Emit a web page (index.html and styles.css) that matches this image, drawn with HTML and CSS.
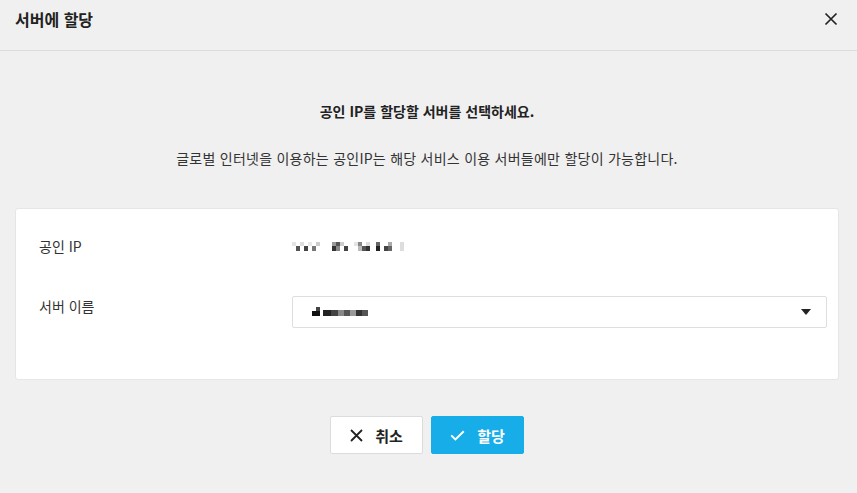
FILE: index.html
```html
<!DOCTYPE html>
<html lang="ko">
<head>
    <meta charset="UTF-8">
    <meta name="viewport" content="width=device-width, initial-scale=1.0">
    <title>서버에 할당</title>
    <link rel="stylesheet" href="styles.css">
</head>
<body>
    <div class="modal">
        <header class="modal-header">
            <h2 class="modal-title">서버에 할당</h2>
            <button class="close-button" aria-label="닫기">
                <svg width="14" height="14" viewBox="0 0 14 14"><path d="M1.5 1.5 L12.5 12.5 M12.5 1.5 L1.5 12.5" stroke="#222" stroke-width="1.7" fill="none"/></svg>
            </button>
        </header>

        <main class="modal-body">
            <p class="guide-title">공인 IP를 할당할 서버를 선택하세요.</p>
            <p class="guide-text">글로벌 인터넷을 이용하는 공인IP는 해당 서비스 이용 서버들에만 할당이 가능합니다.</p>

            <section class="form-card">
                <div class="form-row">
                    <span class="form-label">공인 IP</span>
                    <span class="form-value">
                        <!-- 마스킹된 IP -->
                        <svg class="masked" width="114" height="15" viewBox="0 0 114 15">
                            <rect x="0" y="3" width="4" height="4" fill="#e4e4e4"/>
                            <rect x="4" y="7" width="4" height="5" fill="#555"/>
                            <rect x="8" y="3" width="4" height="4" fill="#ddd"/>
                            <rect x="12" y="7" width="4" height="5" fill="#444"/>
                            <rect x="16" y="3" width="4" height="4" fill="#e8e8e8"/>
                            <rect x="20" y="7" width="4" height="5" fill="#777"/>
                            <rect x="24" y="3" width="4" height="4" fill="#ccc"/>
                            <rect x="40" y="3" width="4" height="4" fill="#999"/>
                            <rect x="40" y="7" width="4" height="5" fill="#333"/>
                            <rect x="44" y="3" width="4" height="4" fill="#555"/>
                            <rect x="44" y="7" width="4" height="5" fill="#888"/>
                            <rect x="48" y="3" width="4" height="4" fill="#ccc"/>
                            <rect x="52" y="7" width="4" height="5" fill="#444"/>
                            <rect x="62" y="3" width="4" height="4" fill="#e4e4e4"/>
                            <rect x="66" y="3" width="4" height="4" fill="#888"/>
                            <rect x="66" y="7" width="4" height="5" fill="#bbb"/>
                            <rect x="70" y="7" width="4" height="5" fill="#555"/>
                            <rect x="74" y="3" width="4" height="4" fill="#ddd"/>
                            <rect x="74" y="7" width="4" height="5" fill="#333"/>
                            <rect x="84" y="3" width="4" height="4" fill="#666"/>
                            <rect x="84" y="7" width="4" height="5" fill="#222"/>
                            <rect x="92" y="7" width="4" height="5" fill="#444"/>
                            <rect x="96" y="3" width="4" height="4" fill="#aaa"/>
                            <rect x="96" y="7" width="4" height="5" fill="#666"/>
                            <rect x="108" y="3" width="4" height="9" fill="#ddd"/>
                        </svg>
                    </span>
                </div>
                <div class="form-row">
                    <span class="form-label">서버 이름</span>
                    <div class="select-box">
                        <svg class="masked" width="60" height="10" viewBox="0 0 60 10">
                            <rect x="4" y="0" width="4" height="4" fill="#444"/>
                            <rect x="0" y="4" width="8" height="5" fill="#111"/>
                            <rect x="11" y="3" width="8" height="6" fill="#222"/>
                            <rect x="19" y="3" width="7" height="6" fill="#444"/>
                            <rect x="26" y="3" width="6" height="6" fill="#888"/>
                            <rect x="32" y="3" width="6" height="6" fill="#555"/>
                            <rect x="38" y="3" width="6" height="6" fill="#999"/>
                            <rect x="44" y="3" width="6" height="6" fill="#333"/>
                            <rect x="50" y="3" width="6" height="6" fill="#555"/>
                        </svg>
                        <span class="select-arrow"></span>
                    </div>
                </div>
            </section>

            <div class="button-group">
                <button class="btn btn-cancel">
                    <svg width="13" height="13" viewBox="0 0 13 13"><path d="M1 1 L12 12 M12 1 L1 12" stroke="#222" stroke-width="1.8" fill="none"/></svg>
                    취소
                </button>
                <button class="btn btn-assign">
                    <svg width="15" height="11" viewBox="0 0 15 11"><path d="M1.2 5.4 L5.4 9.4 L13.8 1.2" stroke="#fff" stroke-width="2" fill="none"/></svg>
                    할당
                </button>
            </div>
        </main>
    </div>
</body>
</html>
```

FILE: styles.css
```css
body {
    margin: 0;
    padding: 0;
    background-color: #f0f0f0;
    color: #222;
    font-family: "Noto Sans CJK KR", "Noto Sans", sans-serif;
}

.modal-header {
    display: flex;
    justify-content: space-between;
    align-items: flex-start;
    height: 51px;
    padding: 8px 15px 0 15px;
    box-sizing: border-box;
    border-bottom: 1px solid #dcdcdc;
}
.modal-title {
    margin: 0;
    font-size: 16px;
    line-height: 22px;
    font-weight: bold;
    color: #222;
}
.close-button {
    background: none;
    border: none;
    padding: 0;
    margin: 4px 4px 0 0;
    width: 14px;
    height: 14px;
    cursor: pointer;
}

.modal-body {
    padding: 50px 18px 0 15px;
}
.guide-title {
    margin: 0;
    text-align: center;
    font-size: 14px;
    line-height: 20px;
    font-weight: bold;
    color: #222;
}
.guide-text {
    margin: 27px 0 0 0;
    text-align: center;
    font-size: 14px;
    line-height: 20px;
    letter-spacing: 0.25px;
    color: #333;
}

.form-card {
    margin-top: 40px;
    background: #ffffff;
    border: 1px solid #e6e6e6;
    border-radius: 3px;
    padding: 27px 11px 51px 23px;
}
.form-row {
    display: grid;
    grid-template-columns: 253px 1fr;
    align-items: start;
}
.form-row + .form-row {
    margin-top: 40px;
}
.form-label {
    font-size: 14px;
    line-height: 20px;
    color: #333;
}
.form-value {
    line-height: 20px;
    height: 20px;
}
.masked {
    display: block;
}
.form-value .masked {
    margin-top: 3px;
}
.select-box {
    position: relative;
    height: 32px;
    border: 1px solid #dedede;
    border-radius: 2px;
    box-sizing: border-box;
    padding: 10px 0 0 19px;
}
.select-arrow {
    position: absolute;
    right: 15px;
    top: 12px;
    width: 0;
    height: 0;
    border-left: 5px solid transparent;
    border-right: 5px solid transparent;
    border-top: 6px solid #222;
}

.button-group {
    display: flex;
    justify-content: center;
    gap: 8px;
    margin-top: 36px;
}
.btn {
    display: flex;
    align-items: center;
    justify-content: center;
    gap: 12px;
    width: 93px;
    height: 38px;
    border-radius: 2px;
    font-family: "Noto Sans CJK KR", "Noto Sans", sans-serif;
    font-size: 15px;
    font-weight: bold;
    cursor: pointer;
}
.btn-cancel {
    background: #ffffff;
    border: 1px solid #dcdcdc;
    color: #222;
}
.btn-assign {
    background: #17ade8;
    border: 1px solid #17ade8;
    color: #ffffff;
}
```
